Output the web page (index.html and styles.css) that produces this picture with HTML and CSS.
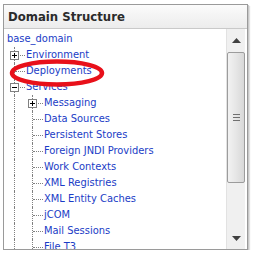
FILE: index.html
```html
<!DOCTYPE html>
<html>
<head>
<meta charset="utf-8">
<link rel="stylesheet" href="styles.css">
</head>
<body>
<div class="panel">
  <div class="hdr">Domain Structure</div>
  <div class="body">
    <div class="tree">
      <div class="row root"><a>base_domain</a></div>
      <div class="row"><span class="g t"><i class="box plus"></i></span><a>Environment</a></div>
      <div class="row"><span class="g t"></span><a>Deployments</a></div>
      <div class="row"><span class="g t"><i class="box"></i></span><a>Services</a></div>
      <div class="row"><span class="g i"></span><span class="g t"><i class="box plus"></i></span><a>Messaging</a></div>
      <div class="row"><span class="g i"></span><span class="g t"></span><a>Data Sources</a></div>
      <div class="row"><span class="g i"></span><span class="g t"></span><a>Persistent Stores</a></div>
      <div class="row"><span class="g i"></span><span class="g t"></span><a>Foreign JNDI Providers</a></div>
      <div class="row"><span class="g i"></span><span class="g t"></span><a>Work Contexts</a></div>
      <div class="row"><span class="g i"></span><span class="g t"></span><a>XML Registries</a></div>
      <div class="row"><span class="g i"></span><span class="g t"></span><a>XML Entity Caches</a></div>
      <div class="row"><span class="g i"></span><span class="g t"></span><a>jCOM</a></div>
      <div class="row"><span class="g i"></span><span class="g t"></span><a>Mail Sessions</a></div>
      <div class="row"><span class="g i"></span><span class="g t"></span><a>File T3</a></div>
    </div>
    <div class="sb">
      <div class="arrow"><svg width="9" height="5" viewBox="0 0 9 5"><path d="M0 5 L4.5 0 L9 5 Z" fill="#404040"/></svg></div>
      <div class="track">
        <div class="thumb"><span class="grip"></span><span class="grip"></span><span class="grip"></span></div>
      </div>
      <div class="arrow"><svg width="9" height="5" viewBox="0 0 9 5"><path d="M0 0 L9 0 L4.5 5 Z" fill="#404040"/></svg></div>
    </div>
  </div>
  <svg class="ring" width="100" height="34" viewBox="0 0 100 34"><ellipse cx="50" cy="17" rx="45" ry="11.5" fill="none" stroke="#e8101a" stroke-width="4.5"/></svg>
</div>
</body>
</html>
```
FILE: styles.css
```css
html, body {
  margin: 0;
  padding: 0;
  background: #ffffff;
}
.panel {
  position: relative;
  margin: 4px 0 0 3px;
  width: 243px;
  height: 244px;
  border: 1px solid #9a9a9a;
  box-shadow: 1px 1px 0 #c8c8c8, 2px 2px 1px #e0e0e0;
  display: flex;
  flex-direction: column;
  background: #fff;
  overflow: hidden;
}
.hdr {
  height: 23px;
  flex: none;
  border-bottom: 1px solid #c9c9c9;
  background: linear-gradient(#fbfbfb, #ececec);
  font: bold 13px "DejaVu Sans Condensed", "DejaVu Sans", sans-serif;
  color: #2b2b2b;
  line-height: 24px;
  padding-left: 4px;
}
.body {
  flex: 1;
  display: flex;
  min-height: 0;
}
.tree {
  flex: 1;
  padding: 2px 0 0 4px;
  overflow: hidden;
  font: 11px "DejaVu Sans Condensed", "DejaVu Sans", sans-serif;
}
.row {
  display: flex;
  height: 16px;
  line-height: 16px;
  white-space: nowrap;
}
.root a { margin-left: -1px; }
.row a {
  color: #1a3cc6;
  text-decoration: none;
}
.g {
  position: relative;
  width: 18px;
  height: 16px;
  flex: none;
}
.g::before {
  content: "";
  position: absolute;
  left: 6px;
  top: 0;
  bottom: 0;
  border-left: 1px dotted #808080;
}
.g.t::after {
  content: "";
  position: absolute;
  left: 7px;
  top: 8px;
  width: 10px;
  border-top: 1px dotted #808080;
}
.box {
  position: absolute;
  left: 2px;
  top: 4px;
  width: 7px;
  height: 7px;
  border: 1px solid #808080;
  background: #fff;
  z-index: 1;
}
.box::before {
  content: "";
  position: absolute;
  left: 1px;
  top: 3px;
  width: 5px;
  height: 1px;
  background: #000;
}
.box.plus::after {
  content: "";
  position: absolute;
  left: 3px;
  top: 1px;
  width: 1px;
  height: 5px;
  background: #000;
}
.sb {
  width: 18px;
  flex: none;
  margin-right: 2px;
  background: #f0f0f0;
  border-left: 1px solid #e2e2e2;
  display: flex;
  flex-direction: column;
}
.arrow {
  height: 22px;
  flex: none;
  display: flex;
  align-items: center;
  justify-content: center;
}
.track {
  flex: 1;
  padding-top: 1px;
}
.thumb {
  height: 129px;
  border: 1px solid #9c9c9c;
  border-radius: 2px;
  background: linear-gradient(90deg, #f2f2f2, #e6e6e6 50%, #d8d8d8);
  display: flex;
  flex-direction: column;
  align-items: center;
  justify-content: center;
  gap: 2px;
}
.grip {
  width: 7px;
  height: 1px;
  background: #707070;
}
.ring {
  position: absolute;
  left: 3px;
  top: 51px;
}
```
